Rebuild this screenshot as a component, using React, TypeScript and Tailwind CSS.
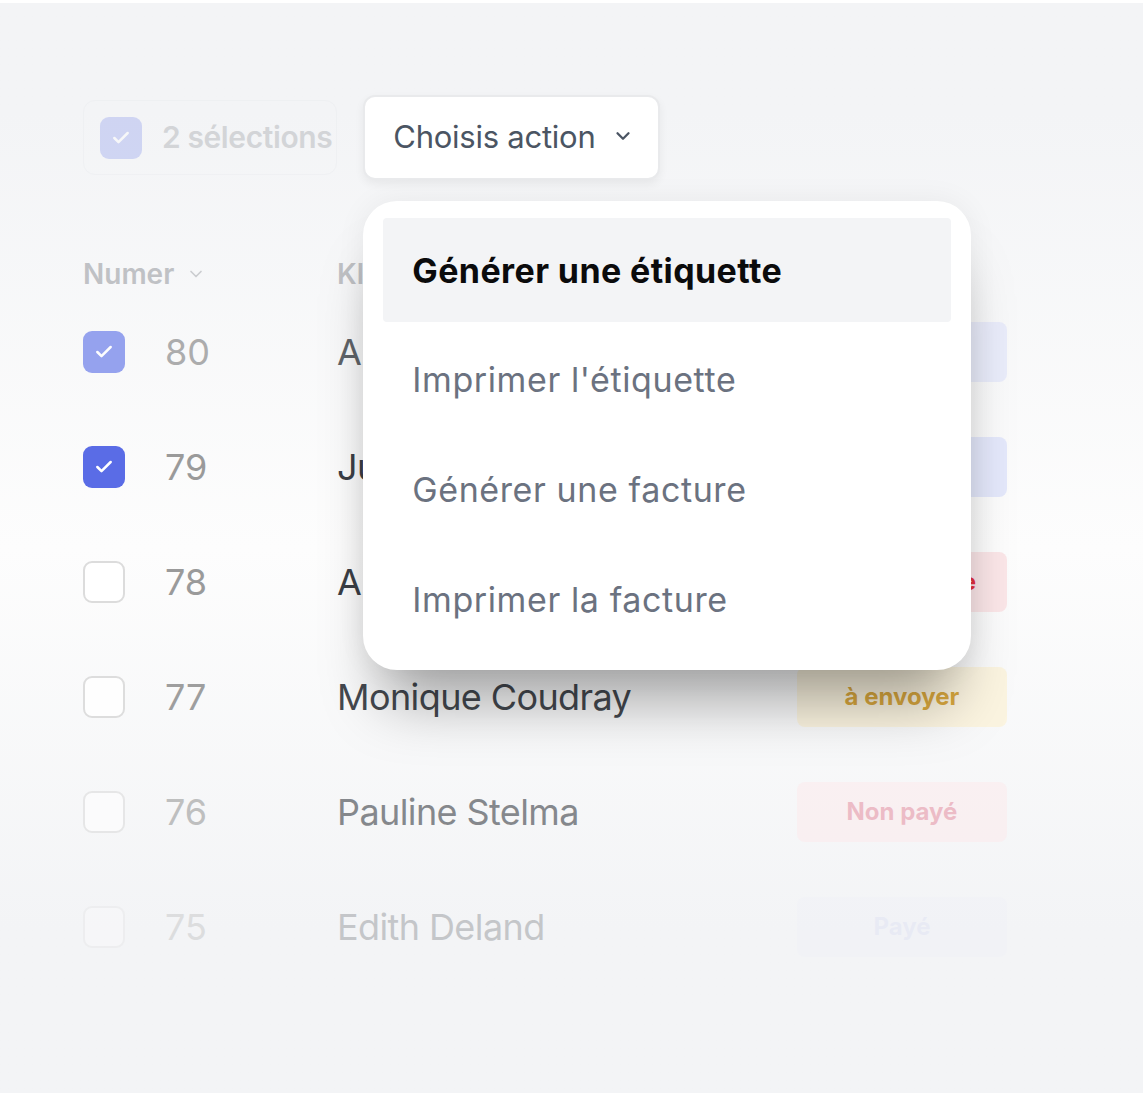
import { Check, ChevronDown } from 'lucide-react';

type Row = {
  num: number;
  name: string;
  checked: boolean;
  status: string;
  badge: string;
  fade: string;
};

const rows: Row[] = [
  { num: 80, name: 'Amélie Durand', checked: true, status: 'Payé', badge: 'bg-[#e6e9fb] text-[#8a97e6]', fade: 'opacity-80' },
  { num: 79, name: 'Julien Martin', checked: true, status: 'Payé', badge: 'bg-[#e4e8fb] text-[#7d8be6]', fade: 'opacity-100' },
  { num: 78, name: 'Alice Bernard', checked: false, status: 'Remboursée', badge: 'bg-[#fbe6e8] text-[#e5303f]', fade: 'opacity-100' },
  { num: 77, name: 'Monique Coudray', checked: false, status: 'à envoyer', badge: 'bg-[#fcf4df] text-[#d9a535]', fade: 'opacity-95' },
  { num: 76, name: 'Pauline Stelma', checked: false, status: 'Non payé', badge: 'bg-[#fcecee] text-[#e795a6]', fade: 'opacity-60' },
  { num: 75, name: 'Edith Deland', checked: false, status: 'Payé', badge: 'bg-[#eef0f8] text-[#c9cff2]', fade: 'opacity-25' },
];

const actions = ['Imprimer l\'étiquette', 'Générer une facture', 'Imprimer la facture'];

function Checkbox({ checked, light }: { checked: boolean; light?: boolean }) {
  if (checked) {
    return (
      <div
        className={`w-[42px] h-[42px] rounded-[9px] flex items-center justify-center ${
          light ? 'bg-[#7d8dec]' : 'bg-[#5a6ce6]'
        }`}
      >
        <Check size={20} strokeWidth={3} className="text-white" />
      </div>
    );
  }
  return <div className="w-[42px] h-[42px] rounded-[9px] border-2 border-[#dcdcdc] bg-white" />;
}

export default function App() {
  return (
    <div className="w-[1143px] h-[1093px] bg-white pt-[3px] font-['Inter',sans-serif]">
      <div className="h-full bg-gradient-to-b from-[#f3f4f6] from-10% via-[#fdfdfd] via-50% to-[#f3f4f6] to-85% px-[83px] pt-[92px]">
        {/* Toolbar */}
        <div className="flex items-center gap-[26px]">
          <div className="opacity-30 flex items-center gap-5 h-[75px] pl-[16px] pr-1 rounded-xl border border-[#e5e7eb]">
            <Checkbox checked light />
            <span className="text-[30px] font-semibold tracking-[-0.4px] text-[#8a8d93]">2 sélections</span>
          </div>

          <div className="relative z-10">
            <button className="h-[85px] pl-[28px] pr-[24px] flex items-center gap-[17px] bg-white rounded-[12px] border-2 border-[#e9eaec] shadow-[0_4px_10px_rgba(0,0,0,0.06)]">
              <span className="text-[31px] tracking-[-0.25px] text-[#4b5563]">Choisis action</span>
              <ChevronDown size={22} strokeWidth={2.5} className="text-[#4b5563] -mt-1" />
            </button>

            {/* Dropdown menu */}
            <div className="absolute top-[106px] left-0 w-[608px] h-[469px] bg-white rounded-[34px] pt-[17px] px-[20px] shadow-[0_50px_60px_-20px_rgba(0,0,0,0.35),0_0_30px_rgba(0,0,0,0.06)]">
              <div className="h-[104px] rounded-[4px] bg-[#f3f4f6] flex items-center pl-[29px]">
                <span className="text-[34px] font-bold tracking-[0.4px] text-[#0b0b0c]">Générer une étiquette</span>
              </div>
              <div className="mt-[2px] flex flex-col">
                {actions.map((a) => (
                  <div key={a} className="h-[110px] flex items-center pl-[29px]">
                    <span className="text-[34px] tracking-[0.6px] text-[#6b7280]">{a}</span>
                  </div>
                ))}
              </div>
            </div>
          </div>
        </div>

        {/* Header */}
        <div className="mt-[74px] h-[40px] flex items-center opacity-50">
          <div className="w-[254px] flex items-center gap-3">
            <span className="text-[28px] font-semibold tracking-[0px] text-[#8a8d93]">Numer</span>
            <ChevronDown size={20} strokeWidth={2} className="text-[#a0a3a8]" />
          </div>
          <span className="text-[28px] font-semibold text-[#8a8d93]">Kl</span>
        </div>

        {/* Rows */}
        <div className="flex flex-col">
          {rows.map((r, i) => (
            <div key={r.num} className={`h-[115px] flex items-center ${r.fade}`}>
              <Checkbox checked={r.checked} light={i === 0} />
              <span className="ml-[40px] w-[172px] text-[36px] text-[#9a9a9a]">{r.num}</span>
              <span className="w-[460px] text-[36px] tracking-[-0.6px] text-[#3b3f46]">{r.name}</span>
              <div className={`w-[210px] h-[60px] rounded-[8px] flex items-center justify-center ${r.badge}`}>
                <span className="text-[24px] font-bold">{r.status}</span>
              </div>
            </div>
          ))}
        </div>
      </div>
    </div>
  );
}
